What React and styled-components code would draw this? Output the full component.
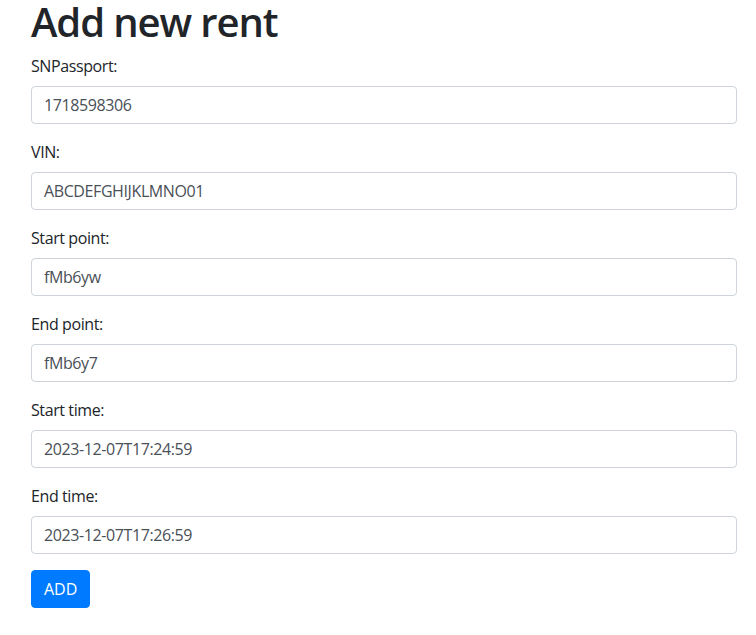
import React, { useState } from 'react'
import styled, { createGlobalStyle } from 'styled-components'

const GlobalStyle = createGlobalStyle`
    html, body {
        margin: 0;
        padding: 0;
        background: #fff;
    }
    body {
        font-family: "Segoe UI", "Open Sans", "Noto Sans", Arial, sans-serif;
        font-size: 16px;
        line-height: 1.5;
        color: #212529;
    }
    * {
        box-sizing: border-box;
    }
`;

const Page = styled.div`
    width: 706px;
    margin-left: 31px;
`;
const Heading = styled.h1`
    margin: 0 0 10px;
    font-size: 40px;
    font-weight: 600;
    line-height: 44px;
    letter-spacing: -1.1px;
`;
const Group = styled.div`
    margin-bottom: 16px;
`;
const Label = styled.label`
    display: block;
    margin-bottom: 8px;
    letter-spacing: -0.4px;
`;
const Input = styled.input`
    display: block;
    width: 100%;
    height: 38px;
    padding: 6px 12px;
    font-family: inherit;
    font-size: 16px;
    line-height: 1.5;
    letter-spacing: -0.4px;
    color: #495057;
    background: #fff;
    border: 1px solid #ced4da;
    border-radius: 4px;
    outline: none;
`;
const AddButton = styled.button`
    display: inline-block;
    height: 38px;
    padding: 6px 12px;
    font-family: inherit;
    font-size: 16px;
    line-height: 1.5;
    color: #fff;
    background: #007bff;
    border: 1px solid #007bff;
    border-radius: 4px;
    cursor: pointer;
`;

const fields = [
    { name: 'snPassport', label: 'SNPassport:', value: '1718598306' },
    { name: 'vin', label: 'VIN:', value: 'ABCDEFGHIJKLMNO01' },
    { name: 'startPoint', label: 'Start point:', value: 'fMb6yw' },
    { name: 'endPoint', label: 'End point:', value: 'fMb6y7' },
    { name: 'startTime', label: 'Start time:', value: '2023-12-07T17:24:59' },
    { name: 'endTime', label: 'End time:', value: '2023-12-07T17:26:59' },
];

const App = () => {
    const [form, setForm] = useState(
        Object.fromEntries(fields.map((f) => [f.name, f.value]))
    );

    const handleChange = (e) => {
        setForm({ ...form, [e.target.name]: e.target.value });
    };

    return (
        <>
            <GlobalStyle />
            <Page>
                <Heading>Add new rent</Heading>
                {fields.map((f) => (
                    <Group key={f.name}>
                        <Label htmlFor={f.name}>{f.label}</Label>
                        <Input id={f.name} name={f.name} value={form[f.name]} onChange={handleChange} />
                    </Group>
                ))}
                <AddButton>ADD</AddButton>
            </Page>
        </>
    )
}

export default App
